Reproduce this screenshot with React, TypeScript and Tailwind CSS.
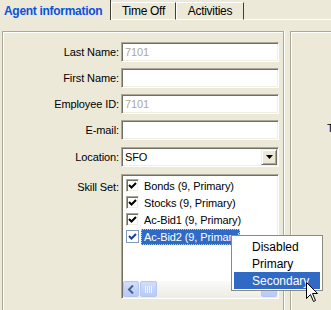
import React from "react";

const sunken =
  "border border-t-[#aca899] border-l-[#aca899] border-b-white border-r-white shadow-[inset_1px_1px_0_#716f64,inset_-1px_-1px_0_#f1efe2]";

const Check = ({ color = "#000" }: { color?: string }) => (
  <svg width="9" height="9" viewBox="0 0 9 9">
    <polyline points="1,4 3.5,6.5 8,2" fill="none" stroke={color} strokeWidth="2" />
  </svg>
);

const Row = ({ label, children }: { label: string; children: React.ReactNode }) => (
  <div className="flex items-center gap-[2px]">
    <div className="w-[116px] text-right text-black">{label}</div>
    {children}
  </div>
);

const TextBox = ({ value, muted }: { value?: string; muted?: boolean }) => (
  <div className={`h-[20px] w-[158px] bg-white pl-[3px] leading-[18px] ${sunken} ${muted ? "text-[#aca899]" : "text-black"}`}>
    {value}
  </div>
);

const skills = ["Bonds (9, Primary)", "Stocks (9, Primary)", "Ac-Bid1 (9, Primary)", "Ac-Bid2 (9, Primary)"];

const ScrollBtn = ({ children, wide }: { children?: React.ReactNode; wide?: boolean }) => (
  <div
    className={`flex h-[16px] ${wide ? "w-[17px]" : "w-[16px]"} items-center justify-center rounded-[2px] border border-[#b3c7ef] bg-gradient-to-b from-[#d2defb] to-[#b6cbf7]`}
  >
    {children}
  </div>
);

export default function App() {
  return (
    <div className="relative h-[310px] w-[331px] overflow-hidden bg-[#ece9d8] font-['Liberation_Sans',Arial,sans-serif] text-[11px] tracking-[-0.1px]">
      {/* tabs */}
      <div className="flex h-[20px]">
        <div className="flex w-[111px] items-center border-r border-r-[#403f38] pl-[4px] pt-[1px] text-[12px] font-bold tracking-[-0.3px] text-[#0a50e0]">
          Agent information
        </div>
        <div className="mt-[2px] flex w-[65px] items-center justify-center border-l border-t border-b border-white border-r border-r-[#403f38] text-[12px] tracking-[-0.3px]">
          Time Off
        </div>
        <div className="mt-[2px] flex w-[68px] items-center justify-center border-l border-t border-b border-white border-r border-r-[#403f38] text-[12px] tracking-[-0.3px]">
          Activities
        </div>
        <div className="flex-1 border-b border-white" />
      </div>

      {/* body */}
      <div className="flex gap-[6px] pl-[2px] pt-[11px]">
        <div className="h-[300px] w-[282px] shrink-0 border border-[#aca899] pt-[10px] shadow-[inset_1px_1px_0_white,1px_0_0_white]">
          <div className="flex flex-col gap-[6px]">
            <Row label="Last Name:">
              <TextBox value="7101" muted />
            </Row>
            <Row label="First Name:">
              <TextBox />
            </Row>
            <Row label="Employee ID:">
              <TextBox value="7101" muted />
            </Row>
            <Row label="E-mail:">
              <TextBox />
            </Row>
            <div className="mt-[1px]">
              <Row label="Location:">
                <div className={`flex h-[20px] w-[158px] items-center bg-white pl-[3px] ${sunken}`}>
                  <span className="flex-1">SFO</span>
                  <div className="mr-[1px] flex h-[16px] w-[16px] items-center justify-center border border-t-[#f1efe2] border-l-[#f1efe2] border-b-[#716f64] border-r-[#716f64] bg-[#ece9d8] shadow-[inset_1px_1px_0_white,inset_-1px_-1px_0_#aca899]">
                    <svg width="7" height="4" viewBox="0 0 7 4">
                      <polygon points="0,0 7,0 3.5,4" fill="#000" />
                    </svg>
                  </div>
                </div>
              </Row>
            </div>
            <div className="mt-[1px] flex gap-[2px]">
              <div className="w-[116px] pt-[5px] text-right">Skill Set:</div>
              <div className={`flex h-[125px] w-[158px] flex-col bg-white ${sunken} p-[1px]`}>
                <div className="flex flex-1 flex-col pl-[3px] pt-[1px]">
                  {skills.map((s, i) => {
                    const sel = i === 3;
                    return (
                      <div key={s} className="flex h-[17px] items-center gap-[2px]">
                        <div
                          className={`flex h-[13px] w-[13px] items-center justify-center bg-white ${
                            sel
                              ? "border border-[#7f9db9]"
                              : "border border-t-[#aca899] border-l-[#aca899] border-b-white border-r-white shadow-[inset_1px_1px_0_#716f64,inset_-1px_-1px_0_#f1efe2]"
                          }`}
                        >
                          <Check color={sel ? "#1c3f94" : "#000"} />
                        </div>
                        <div
                          className={`h-[16px] px-[2px] leading-[14px] ${
                            sel ? "w-[99px] overflow-hidden whitespace-nowrap border border-dotted border-[#e8c878] bg-[#316ac5] text-white" : "border border-transparent"
                          }`}
                        >
                          {s}
                        </div>
                      </div>
                    );
                  })}
                </div>
                <div className="flex h-[16px] bg-gradient-to-b from-[#fafaf8] to-[#eeede5]">
                  <ScrollBtn>
                    <svg width="8" height="9" viewBox="0 0 8 9">
                      <polyline points="6,0.5 2,4.5 6,8.5" fill="none" stroke="#4d6185" strokeWidth="2" />
                    </svg>
                  </ScrollBtn>
                  <div className="ml-[1px]">
                    <ScrollBtn wide>
                      <svg width="8" height="7" viewBox="0 0 8 7">
                        {[0.5, 2.5, 4.5, 6.5].map((x) => (
                          <line key={x} x1={x} y1="0" x2={x} y2="7" stroke="#eef3ff" strokeWidth="1" />
                        ))}
                      </svg>
                    </ScrollBtn>
                  </div>
                  <div className="flex-1" />
                  <ScrollBtn>
                    <svg width="7" height="4" viewBox="0 0 7 4">
                      <polygon points="0,0 7,0 3.5,4" fill="#4d6185" />
                    </svg>
                  </ScrollBtn>
                </div>
              </div>
            </div>
          </div>
        </div>

        <div className="h-[300px] flex-1 border border-r-0 border-[#aca899] pl-[36px] pt-[88px] shadow-[inset_1px_1px_0_white]">
          <span className="whitespace-nowrap">T</span>
        </div>
      </div>

      {/* context menu */}
      <div className="absolute left-[231px] top-[235px] flex h-[56px] w-[92px] flex-col border border-[#8d8a7f] bg-white p-[2px] text-[12px] tracking-normal">
        <div className="flex h-[17px] items-center pl-[18px]">Disabled</div>
        <div className="flex h-[17px] items-center pl-[18px]">Primary</div>
        <div className="flex h-[17px] items-center bg-[#316ac5] pl-[18px] text-white">Secondary</div>
      </div>

      {/* mouse cursor */}
      <svg className="absolute left-[306px] top-[282px]" width="13" height="21" viewBox="0 0 13 21">
        <polygon
          points="0.5,0.5 0.5,16.5 4.5,12.5 7.5,19.5 9.5,18.5 6.5,11.5 11.5,11.5"
          fill="white"
          stroke="black"
          strokeWidth="1"
          strokeLinejoin="miter"
        />
      </svg>
    </div>
  );
}
